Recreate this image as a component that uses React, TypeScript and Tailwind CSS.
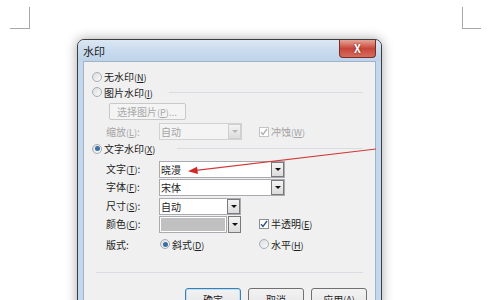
import React from "react";

const Key = ({ k }: { k: string }) => (
  <span className="text-[9px]">
    (<span className="underline">{k}</span>)
  </span>
);

const Radio = ({ checked }: { checked?: boolean }) => (
  <span className="w-[10px] h-[10px] shrink-0 rounded-full border border-[#a3acb6] bg-gradient-to-br from-[#dcdcdc] to-[#fbfbfb] flex items-center justify-center">
    {checked && <span className="w-[5px] h-[5px] rounded-full bg-[#3a6ea5]" />}
  </span>
);

const Check = ({ dim }: { dim?: boolean }) => (
  <span
    className={`w-[10px] h-[10px] shrink-0 border bg-white flex items-center justify-center ${
      dim ? "border-[#c4c4c4]" : "border-[#8e8f8f]"
    }`}
  >
    <svg width="8" height="8" viewBox="0 0 8 8">
      <path
        d="M1 4.2 L3 6.5 L7 1"
        fill="none"
        stroke={dim ? "#b0b0b0" : "#2f5486"}
        strokeWidth="1.4"
      />
    </svg>
  </span>
);

const DropBtn = ({ dim }: { dim?: boolean }) => (
  <span
    className={`w-[13px] h-full shrink-0 border flex items-center justify-center bg-gradient-to-b from-[#f4f4f4] to-[#dcdcdc] ${
      dim ? "border-[#cfcfcf]" : "border-[#7a7a7a]"
    }`}
  >
    <span
      className={`w-0 h-0 border-l-[3px] border-r-[3px] border-t-[3px] border-l-transparent border-r-transparent ${
        dim ? "border-t-[#b5b5b5]" : "border-t-[#111]"
      }`}
    />
  </span>
);

const Combo = ({
  value,
  width,
  dim,
}: {
  value: string;
  width: string;
  dim?: boolean;
}) => (
  <div
    className={`${width} h-[17px] flex items-stretch border ${
      dim ? "border-[#d2d2d2] bg-[#f4f4f4] text-[#a4a4a4]" : "border-[#a9abb0] bg-white"
    }`}
  >
    <span className="flex-1 pl-[1px] leading-[15px]">{value}</span>
    <DropBtn dim={dim} />
  </div>
);

const Field = ({
  label,
  k,
  children,
  className,
}: {
  label: string;
  k: string;
  children: React.ReactNode;
  className?: string;
}) => (
  <div className={`flex items-center h-[17px] ${className ?? ""}`}>
    <span className="ml-[22px] w-[53px]">
      {label}
      <Key k={k} />:
    </span>
    {children}
  </div>
);

const Btn = ({ children, def }: { children: React.ReactNode; def?: boolean }) => (
  <div
    className={`w-[56px] h-[23px] rounded-[3px] border flex items-center justify-center bg-gradient-to-b from-[#f2f2f2] via-[#ebebeb] to-[#d6d6d6] ${
      def ? "border-[#3c7fb1] shadow-[inset_0_0_0_1px_#b9e0f7]" : "border-[#707070]"
    }`}
  >
    {children}
  </div>
);

export default function App() {
  return (
    <div className="relative w-[500px] h-[300px] overflow-hidden bg-white text-[10px] text-[#1c1c1c] font-['Noto_Sans_CJK_SC','DejaVu_Sans',sans-serif]">
      <div className="flex justify-between h-[29px] pt-[7px]">
        <div className="ml-[10px] w-[20px] h-[22px] border-r border-b border-[#a8a8a8]" />
        <div className="mr-[19px] w-[19px] h-[22px] border-l border-b border-[#a8a8a8]" />
      </div>

      <div className="ml-[77px] mt-[10px] w-[305px] border border-[#3e3e3e] rounded-t-[7px] bg-[#c4d7ec] shadow-[0_0_12px_rgba(0,0,0,0.35)]">
        <div className="h-[21px] flex justify-between rounded-t-[6px] bg-gradient-to-b from-[#dbe7f3] via-[#c9dbee] to-[#bed3ea]">
          <span className="ml-[5px] mt-[4px] text-[11px] leading-[14px]">水印</span>
          <div className="mr-[5px] w-[37px] h-[18px] rounded-b-[4px] border border-t-0 border-[#7a2d26] bg-gradient-to-b from-[#e6a497] via-[#c8453a] to-[#d56c5d] flex items-center justify-center">
            <span className="text-white font-bold text-[11px] leading-none [text-shadow:0_0_2px_#5a1a14]">X</span>
          </div>
        </div>

        <div className="mx-[5px] border border-[#9fb3c9] bg-[#f0f0f0] h-[250px] flex flex-col">
          <div className="mt-[7px] h-[16px] flex items-center pl-[8px] gap-[2px]">
            <Radio />
            <span>
              无水印
              <Key k="N" />
            </span>
          </div>

          <div className="h-[16px] flex items-center pl-[8px] gap-[2px]">
            <Radio />
            <span>
              图片水印
              <Key k="I" />
            </span>
            <div className="ml-[14px] mr-[12px] flex-1 border-t border-[#d9dde2]" />
          </div>

          <div className="mt-[3px] ml-[25px] w-[77px] h-[17px] border border-[#c9c9c9] rounded-[2px] bg-[#f4f4f4] text-[#a8a8a8] flex items-center pl-[7px]">
            <span>
              选择图片
              <Key k="P" />
              ...
            </span>
          </div>

          <Field label="缩放" k="L" className="mt-[3px] text-[#a4a4a4]">
            <Combo value="自动" width="w-[83px]" dim />
            <div className="ml-[17px] flex items-center gap-[2px]">
              <Check dim />
              <span>
                冲蚀
                <Key k="W" />
              </span>
            </div>
          </Field>

          <div className="mt-[1px] h-[16px] flex items-center pl-[8px] gap-[2px]">
            <Radio checked />
            <span>
              文字水印
              <Key k="X" />
            </span>
            <div className="ml-[20px] mr-[12px] flex-1 border-t border-[#d9dde2]" />
          </div>

          <Field label="文字" k="T" className="mt-[4px]">
            <Combo value="晓漫" width="w-[126px]" />
          </Field>
          <Field label="字体" k="F" className="mt-[1px]">
            <Combo value="宋体" width="w-[126px]" />
          </Field>
          <Field label="尺寸" k="S" className="mt-[2px]">
            <Combo value="自动" width="w-[82px]" />
          </Field>
          <Field label="颜色" k="C" className="mt-[1px]">
            <div className="w-[82px] h-[17px] flex items-stretch gap-[1px]">
              <div className="flex-1 border border-[#a9abb0] bg-white p-[1px]">
                <div className="h-full bg-[#c0c0c0]" />
              </div>
              <DropBtn />
            </div>
            <div className="ml-[18px] flex items-center gap-[2px]">
              <Check />
              <span>
                半透明
                <Key k="E" />
              </span>
            </div>
          </Field>

          <div className="mt-[4px] h-[17px] flex items-center">
            <span className="ml-[22px] w-[54px]">版式:</span>
            <div className="w-[99px] flex items-center gap-[2px]">
              <Radio checked />
              <span>
                斜式
                <Key k="D" />
              </span>
            </div>
            <div className="flex items-center gap-[2px]">
              <Radio />
              <span>
                水平
                <Key k="H" />
              </span>
            </div>
          </div>

          <div className="mt-[20px] ml-[12px] mr-[12px] border-t border-[#d9dde2]" />

          <div className="mt-[15px] flex justify-end gap-[7px] pr-[8px]">
            <Btn def>确定</Btn>
            <Btn>取消</Btn>
            <Btn>
              应用
              <Key k="A" />
            </Btn>
          </div>
        </div>
      </div>

      <svg
        className="absolute left-0 top-0 pointer-events-none"
        width="500"
        height="300"
        viewBox="0 0 500 300"
      >
        <line x1="376" y1="149" x2="196" y2="170.3" stroke="#d23a3a" strokeWidth="1.2" />
        <polygon points="188,171.2 197,166.8 198,174" fill="#d42828" />
      </svg>
    </div>
  );
}
